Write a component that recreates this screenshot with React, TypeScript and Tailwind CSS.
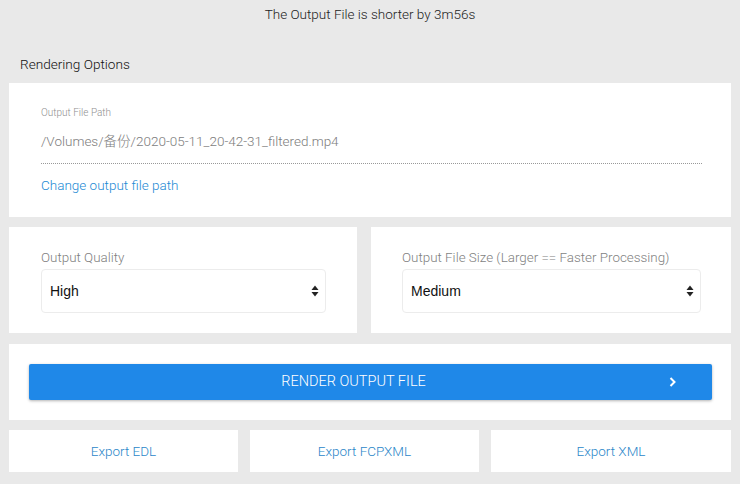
const FONT = { fontFamily: 'Roboto, "Noto Sans CJK SC", sans-serif' };

function SelectBox({ value }: { value: string }) {
  return (
    <div className="flex h-[44px] items-center justify-between rounded-[4px] border border-[#ececec] bg-white pl-[8px] pr-[6px]">
      <span className="text-[14px] text-[#111]" style={{ fontFamily: '"Liberation Sans", Arial, sans-serif' }}>
        {value}
      </span>
      <svg width="8" height="12" viewBox="0 0 8 12" fill="#222">
        <path d="M4 0.5L7.5 5H0.5z" />
        <path d="M4 11.5L7.5 7H0.5z" />
      </svg>
    </div>
  );
}

export default function App() {
  return (
    <div className="min-h-[484px] w-[740px] bg-[#e9e9e9] px-[9px] font-light" style={FONT}>
      {/* status */}
      <div className="flex h-[29px] items-center justify-center text-[13.5px] text-[#222]">
        The Output File is shorter by 3m56s
      </div>

      <div className="mt-[25px] flex h-[20px] items-center pl-[11px] text-[13.6px] text-[#111]">Rendering Options</div>

      {/* output path */}
      <div className="mt-[9px] h-[134px] bg-white pl-[32px] pr-[29px] pt-[24px]">
        <div className="text-[10px] leading-[12px] text-[#8f8f8f]">Output File Path</div>
        <div className="mt-[14px] h-[31px] border-b border-dotted border-[#999] text-[13.5px] leading-[17px] text-[#7d7d7d]">
          /Volumes/备份/2020-05-11_20-42-31_filtered.mp4
        </div>
        <div className="mt-[13px] text-[13.5px] leading-[17px] text-[#1c8ad4]">Change output file path</div>
      </div>

      {/* selects */}
      <div className="mt-[10px] grid grid-cols-[348px_1fr] gap-[14px]">
        <div className="h-[106px] bg-white pl-[32px] pr-[31px] pt-[23px]">
          <div className="text-[13.4px] leading-[16px] text-[#7f7f7f]">Output Quality</div>
          <div className="mt-[3px]">
            <SelectBox value="High" />
          </div>
        </div>
        <div className="h-[106px] bg-white pl-[31px] pr-[30px] pt-[23px]">
          <div className="text-[13.4px] leading-[16px] text-[#7f7f7f]">Output File Size (Larger == Faster Processing)</div>
          <div className="mt-[3px]">
            <SelectBox value="Medium" />
          </div>
        </div>
      </div>

      {/* render */}
      <div className="mt-[11px] h-[76px] bg-white py-[20px] pl-[20px] pr-[19px]">
        <button className="relative flex h-[36px] w-full items-center justify-center rounded-[2px] bg-[#1f88e8] pr-[34px] text-[14.5px] text-white shadow-[0_1px_3px_rgba(0,0,0,0.3)]">
          RENDER OUTPUT FILE
          <svg className="absolute right-[36px] top-[13px]" width="7" height="10" viewBox="0 0 7 10" fill="none" stroke="white" strokeWidth="2">
            <path d="M1.5 1L5.5 5L1.5 9" />
          </svg>
        </button>
      </div>

      {/* exports */}
      <div className="mt-[10px] grid grid-cols-[229px_229px_1fr] gap-[12px]">
        {['Export EDL', 'Export FCPXML', 'Export XML'].map((label) => (
          <div key={label} className="flex h-[42px] items-center justify-center bg-white text-[13.5px] text-[#2b87c9]">
            {label}
          </div>
        ))}
      </div>
    </div>
  );
}
